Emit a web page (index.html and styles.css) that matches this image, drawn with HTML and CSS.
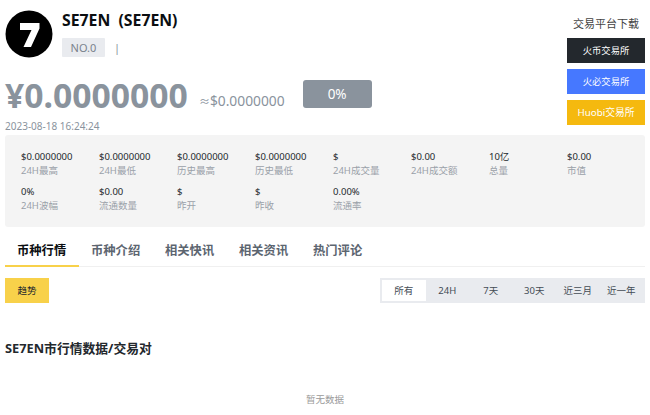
FILE: index.html
```html
<!DOCTYPE html>
<html lang="zh-CN">
<head>
<meta charset="utf-8">
<title>SE7EN</title>
<link rel="stylesheet" href="styles.css">
</head>
<body>
<div class="page">
  <header class="top">
    <div class="left">
      <div class="identity">
        <svg class="logo" viewBox="0 0 48 48" width="48" height="48" aria-hidden="true">
          <circle cx="24" cy="24" r="23.5" fill="#000"/>
          <path d="M15 13H34.500V18.500L26 37H18.500L26.500 20H15Z" fill="#fff"/>
        </svg>
        <div class="names">
          <h1 class="title">SE7EN&nbsp;&nbsp;(SE7EN)</h1>
          <div class="meta"><span class="chip">NO.0</span><span class="sep">|</span></div>
        </div>
      </div>
      <div class="price-row">
        <span class="price">¥0.0000000</span>
        <span class="approx"><small class="approx-sign">≈</small>$0.0000000</span>
        <span class="change">0%</span>
      </div>
      <div class="time">2023-08-18 16:24:24</div>
    </div>
    <aside class="download">
      <div class="download-title">交易平台下载</div>
      <a class="btn btn-dark">火币交易所</a>
      <a class="btn btn-blue">火必交易所</a>
      <a class="btn btn-gold">Huobi交易所</a>
    </aside>
  </header>

  <section class="stats">
    <div class="stat"><b>$0.0000000</b><span>24H最高</span></div>
    <div class="stat"><b>$0.0000000</b><span>24H最低</span></div>
    <div class="stat"><b>$0.0000000</b><span>历史最高</span></div>
    <div class="stat"><b>$0.0000000</b><span>历史最低</span></div>
    <div class="stat"><b>$</b><span>24H成交量</span></div>
    <div class="stat"><b>$0.00</b><span>24H成交额</span></div>
    <div class="stat"><b>10亿</b><span>总量</span></div>
    <div class="stat"><b>$0.00</b><span>市值</span></div>
    <div class="stat"><b>0%</b><span>24H波幅</span></div>
    <div class="stat"><b>$0.00</b><span>流通数量</span></div>
    <div class="stat"><b>$</b><span>昨开</span></div>
    <div class="stat"><b>$</b><span>昨收</span></div>
    <div class="stat"><b>0.00%</b><span>流通率</span></div>
  </section>

  <nav class="tabs">
    <a class="tab tab-active">币种行情</a>
    <a class="tab">币种介绍</a>
    <a class="tab">相关快讯</a>
    <a class="tab">相关资讯</a>
    <a class="tab">热门评论</a>
  </nav>

  <div class="toolbar">
    <button class="trend">趋势</button>
    <div class="ranges">
      <span class="range range-active">所有</span>
      <span class="range">24H</span>
      <span class="range">7天</span>
      <span class="range">30天</span>
      <span class="range">近三月</span>
      <span class="range">近一年</span>
    </div>
  </div>

  <h2 class="section-title">SE7EN市行情数据/交易对</h2>
  <p class="empty">暂无数据</p>
</div>
</body>
</html>
```
FILE: styles.css
```css
* { box-sizing: border-box; }
html, body { margin: 0; padding: 0; background: #fff; }
body {
  font-family: "Noto Sans", "Noto Sans CJK SC", sans-serif;
  color: #23282d;
  overflow: hidden;
}
.page { width: 650px; height: 415px; padding: 0 5px; overflow: hidden; }

.top { display: flex; justify-content: space-between; height: 135px; }
.left { display: flex; flex-direction: column; }
.identity { display: flex; padding-top: 10px; }
.logo { display: block; flex: none; }
.names { margin-left: 9px; }
.title { margin: 0; height: 28px; font-size: 15.800px; line-height: 21px; font-weight: 700; color: #0b0e11; }
.meta { display: flex; align-items: center; }
.chip {
  width: 43px; height: 19px; background: #e9ebef; border-radius: 1px;
  font-size: 11px; line-height: 19px; text-align: center; color: #7a828d;
}
.sep { margin-left: 9px; font-size: 11px; color: #8a939d; }

.price-row { display: flex; align-items: flex-start; margin-top: 22px; height: 31px; }
.price { font-size: 33.700px; line-height: 30px; font-weight: 700; color: #8a939d; }
.approx { margin-left: 11px; margin-top: 11px; font-size: 13.800px; line-height: 20px; color: #8a939d; }
.approx-sign { font-size: 11px; }
.change {
  margin-left: 18px; width: 69px; height: 28px; border-radius: 3px; background: #8a939d;
  color: #fff; font-size: 13.500px; line-height: 28px; text-align: center;
}
.time { margin-top: 8px; font-size: 10px; line-height: 14px; color: #8a939d; }

.download { width: 78px; display: flex; flex-direction: column; gap: 6px; padding-top: 16px; }
.download-title { height: 16px; font-size: 11px; line-height: 16px; text-align: center; color: #444; white-space: nowrap; }
.btn { height: 25px; font-size: 9.300px; line-height: 25px; text-align: center; color: #fff; white-space: nowrap; }
.btn-dark { background: #23282d; }
.btn-blue { background: #4678ff; }
.btn-gold { background: #f5b90f; font-size: 9.800px; }

.stats {
  display: grid; grid-template-columns: repeat(8, 78px); row-gap: 7px; align-content: start;
  height: 92px; padding: 15px 16px 0; background: #f4f4f4; border-radius: 3px;
}
.stat { display: flex; flex-direction: column; font-size: 9.500px; line-height: 14px; }
.stat b { font-weight: 400; color: #23282d; }
.stat span { color: #9aa1a9; }

.tabs { display: flex; gap: 24px; height: 40px; padding: 14px 0 0 12px; border-bottom: 1px solid #f0f0f0; }
.tab { position: relative; width: 50px; font-size: 12.300px; line-height: 20px; font-weight: 700; color: #5c6570; white-space: nowrap; }
.tab-active { color: #0b0e11; }
.tab-active::after {
  content: ""; position: absolute; left: -12px; right: -12px; top: 24px; height: 2px; background: #f8d14a;
}

.toolbar { display: flex; justify-content: space-between; margin-top: 11px; height: 25px; }
.trend { width: 44px; height: 25px; padding: 0; border: 0; background: #f8d14a; color: #23282d; font: inherit; font-size: 9.500px; line-height: 25px; }
.ranges { display: flex; width: 265px; padding: 2px; background: #e9ebef; }
.range { width: 44px; height: 21px; font-size: 9.500px; line-height: 21px; text-align: center; color: #444c55; }
.range-active { background: #fff; }

.section-title { margin: 35px 0 0; font-size: 12.800px; line-height: 20px; font-weight: 700; color: #23282d; }
.empty { margin: 35px 0 0; font-size: 9.500px; line-height: 14px; text-align: center; color: #9a9a9a; }
```
